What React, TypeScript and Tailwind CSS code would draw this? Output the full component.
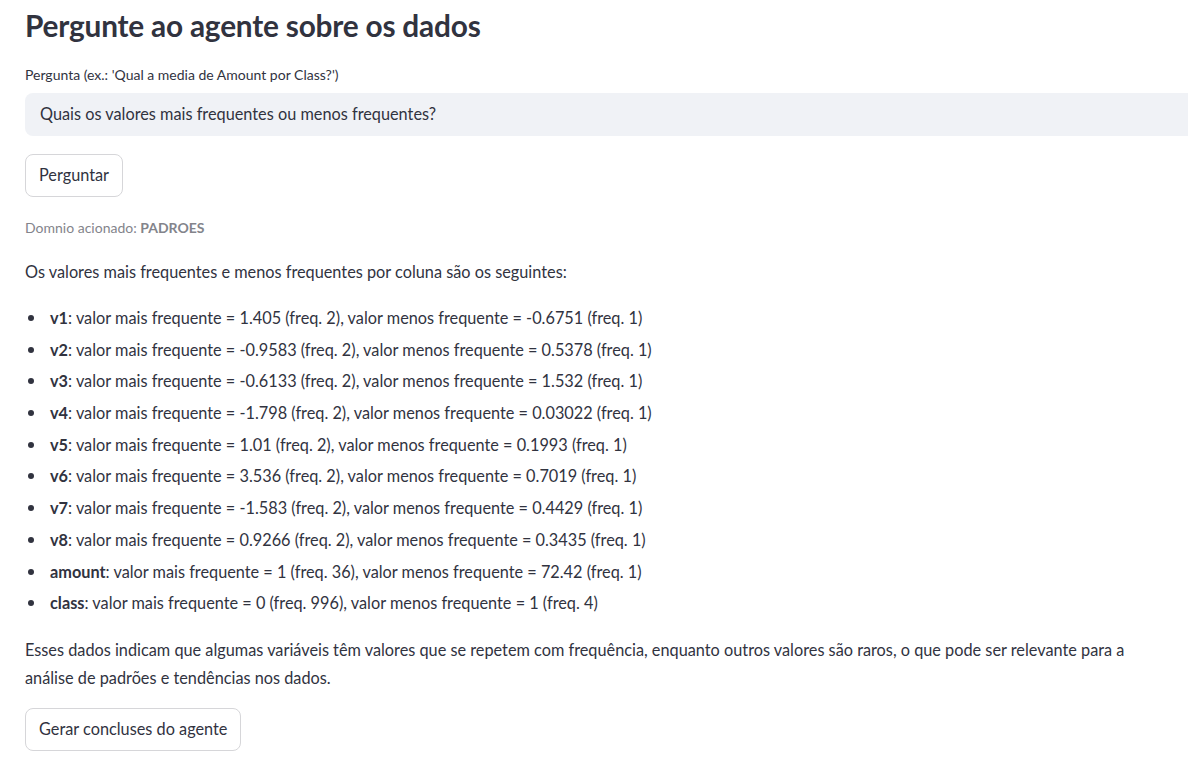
const items: [string, string][] = [
  ['v1', ': valor mais frequente = 1.405 (freq. 2), valor menos frequente = -0.6751 (freq. 1)'],
  ['v2', ': valor mais frequente = -0.9583 (freq. 2), valor menos frequente = 0.5378 (freq. 1)'],
  ['v3', ': valor mais frequente = -0.6133 (freq. 2), valor menos frequente = 1.532 (freq. 1)'],
  ['v4', ': valor mais frequente = -1.798 (freq. 2), valor menos frequente = 0.03022 (freq. 1)'],
  ['v5', ': valor mais frequente = 1.01 (freq. 2), valor menos frequente = 0.1993 (freq. 1)'],
  ['v6', ': valor mais frequente = 3.536 (freq. 2), valor menos frequente = 0.7019 (freq. 1)'],
  ['v7', ': valor mais frequente = -1.583 (freq. 2), valor menos frequente = 0.4429 (freq. 1)'],
  ['v8', ': valor mais frequente = 0.9266 (freq. 2), valor menos frequente = 0.3435 (freq. 1)'],
  ['amount', ': valor mais frequente = 1 (freq. 36), valor menos frequente = 72.42 (freq. 1)'],
  ['class', ': valor mais frequente = 0 (freq. 996), valor menos frequente = 1 (freq. 4)'],
];

export default function App() {
  return (
    <div className="w-[1188px] h-[768px] overflow-hidden bg-white text-[#31333f] font-['Lato','Noto_Sans',sans-serif]">
      <div className="w-[1200px] pl-[25px]">
        <h3 className="pt-[7px] text-[29.8px] font-bold leading-[38px] tracking-[-0.2px]">
          Pergunte ao agente sobre os dados
        </h3>

        <div className="mt-[21px] text-[14px] leading-[18px]">Pergunta (ex.: 'Qual a media de Amount por Class?')</div>
        <div className="mt-[9px] h-[43px] rounded-[8px] bg-[#f0f2f6] flex items-center px-[15px] text-[16.3px]">
          Quais os valores mais frequentes ou menos frequentes?
        </div>

        <button className="mt-[18px] h-[43px] px-[13px] rounded-[8px] border border-[#d6d6d9] bg-white text-[16.3px]">
          Perguntar
        </button>

        <div className="mt-[21px] text-[14px] leading-[20px] text-[#83848b]">
          Domnio acionado: <span className="font-bold">PADROES</span>
        </div>

        <p className="mt-[20px] text-[16.3px] leading-[28px]">
          Os valores mais frequentes e menos frequentes por coluna são os seguintes:
        </p>

        <ul className="mt-[18px] flex flex-col gap-[3.7px] text-[16.3px] leading-[28px]">
          {items.map(([k, rest]) => (
            <li key={k} className="flex items-center">
              <span className="w-[6px] h-[6px] rounded-full bg-[#31333f] ml-[3px] mr-[16px]" />
              <span><b>{k}</b>{rest}</span>
            </li>
          ))}
        </ul>

        <p className="mt-[19px] w-[1140px] text-[16.3px] leading-[28px]">
          Esses dados indicam que algumas variáveis têm valores que se repetem com frequência, enquanto outros valores são raros, o que pode ser relevante para a análise de padrões e tendências nos dados.
        </p>

        <button className="mt-[16px] h-[43px] px-[13px] rounded-[8px] border border-[#d6d6d9] bg-white text-[16.3px]">
          Gerar concluses do agente
        </button>
      </div>
    </div>
  );
}
